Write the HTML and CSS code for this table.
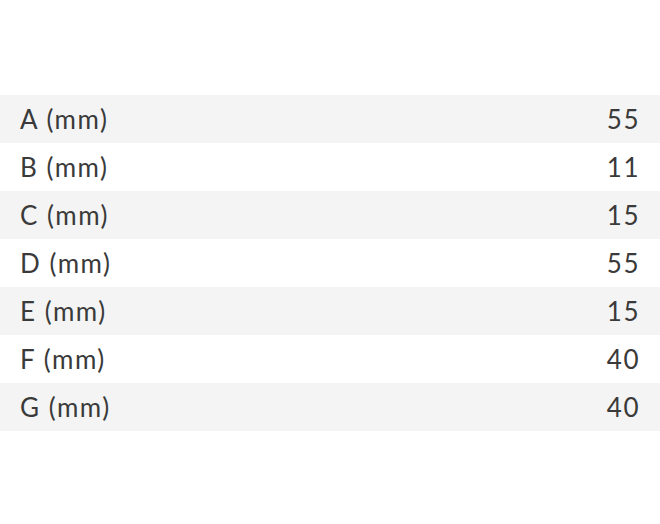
FILE: index.html
```html
<!DOCTYPE html>
<html lang="en">
<head>
    <meta charset="UTF-8">
    <meta name="viewport" content="width=device-width, initial-scale=1.0">
    <title>Dimensions</title>

    <link rel="stylesheet" href="styles.css">

</head>
<body>

    <table class="spec-table">
        <tr><td>A (mm)</td><td class="spec-value">55</td></tr>
        <tr><td>B (mm)</td><td class="spec-value">11</td></tr>
        <tr><td>C (mm)</td><td class="spec-value">15</td></tr>
        <tr><td>D (mm)</td><td class="spec-value">55</td></tr>
        <tr><td>E (mm)</td><td class="spec-value">15</td></tr>
        <tr><td>F (mm)</td><td class="spec-value">40</td></tr>
        <tr><td>G (mm)</td><td class="spec-value">40</td></tr>
    </table>

</body>
</html>
```
FILE: styles.css
```css
body {
    margin: 0;
    padding-top: 95px;
    background-color: #ffffff;
    font-family: Lato, "Open Sans", sans-serif;
    color: #3a3a3a;
}

.spec-table {
    width: 100%;
    border-collapse: collapse;
}

.spec-table td {
    height: 48px;
    padding: 0 20px;
    font-size: 26px;
    letter-spacing: 1.5px;
    vertical-align: middle;
}

.spec-table tr:nth-child(odd) {
    background-color: #f4f4f4;
}

.spec-value {
    text-align: right;
    padding-right: 18px;
}
```
